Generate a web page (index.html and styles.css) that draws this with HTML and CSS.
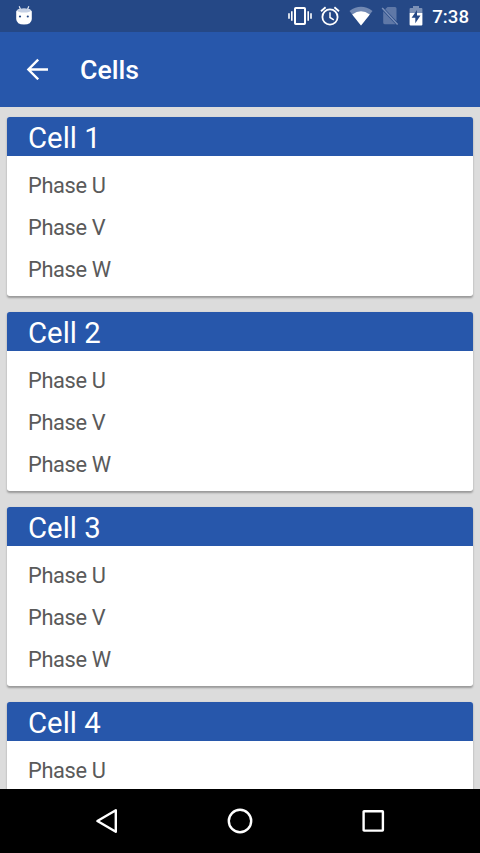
FILE: index.html
```html
<!DOCTYPE html>
<html lang="en">
<head>
<meta charset="utf-8">
<title>Cells</title>
<link rel="stylesheet" href="styles.css">
</head>
<body>
<div class="screen">
  <div class="status">
    <svg class="droid" width="18" height="22" viewBox="0 0 18 22">
      <path d="M4.2 1.2 5.5 4.5M13.8 1.2 12.5 4.5" stroke="#dfe5f0" stroke-width="1.2" fill="none"/>
      <path d="M1.2 6.5Q2 3.5 9 3.5T16.8 6.5V14Q16.5 19.5 9 19.5T1.2 14Z" fill="#fff"/>
      <ellipse cx="9" cy="5.6" rx="7" ry="1.9" fill="#c5d0e4"/>
      <circle cx="5" cy="11.5" r="1.1" fill="#254886"/><circle cx="12.8" cy="11.5" r="1.1" fill="#254886"/>
    </svg>
    <div class="indicators">
      <svg class="vibrate" width="24" height="20" viewBox="0 0 24 20" fill="none" stroke="#fff">
        <rect x="7" y="2" width="10" height="16" rx=".8" stroke-width="2"/>
        <path d="M3.8 5.2v9.6M20.2 5.2v9.6" stroke-width="1.6"/><path d="M1 7.2v5.6M23 7.2v5.6" stroke-width="1.6"/>
      </svg>
      <svg width="20" height="20" viewBox="0 0 20 20" fill="none" stroke="#fff">
        <circle cx="10" cy="11" r="7.6" stroke-width="1.8"/>
        <path d="M1 5.2 5.6 1.2M19 5.2 14.4 1.2" stroke-width="1.8"/><path d="M10 6.3v5.2l3.8 2.3" stroke-width="1.5"/>
      </svg>
      <svg class="wifi" width="24" height="20" viewBox="0 0 24 20">
        <path d="M.5 5Q12-3.4 23.5 5L12 19.4Z" fill="#7289b3"/><path d="M3.2 8.4Q12 2.2 20.8 8.4L12 19.4Z" fill="#fff"/>
      </svg>
      <svg class="sim" width="18" height="20" viewBox="0 0 18 20">
        <path d="M6.5 1H14q1.5 0 1.5 1.5v12.8L4.2 3.3ZM2.2 5.2 14.6 18.2H3.6q-1.4 0-1.4-1.4Z" fill="#5f78a7"/>
        <path d="M1.2 2 16.6 18.4" stroke="#7b90b8" stroke-width="1.5"/>
      </svg>
      <svg class="battery" width="14" height="20" viewBox="0 0 14 20">
        <path d="M4 0h6v2h2.4q1 0 1 1v4H.6V3q0-1 1-1H4Z" fill="#7c91b7"/><path d="M.6 7h12.8v11.5q0 1-1 1H1.6q-1 0-1-1Z" fill="#fff"/>
        <path d="M8 4 2.6 11.8h3.7v5.4l5.2-7.8H8Z" fill="#254886"/>
      </svg>
      <span class="clock">7:38</span>
    </div>
  </div>
  <header class="toolbar">
    <svg width="22" height="22" viewBox="0 0 22 22" fill="none" stroke="#fff" stroke-width="2.4"><path d="M22 11.5H3M12.2 1.7 2.4 11.5l9.8 9.8"/></svg>
    <h1>Cells</h1>
  </header>
  <main class="list">
    <section class="card"><h2>Cell 1</h2><ul><li>Phase U</li><li>Phase V</li><li>Phase W</li></ul></section>
    <section class="card"><h2>Cell 2</h2><ul><li>Phase U</li><li>Phase V</li><li>Phase W</li></ul></section>
    <section class="card"><h2>Cell 3</h2><ul><li>Phase U</li><li>Phase V</li><li>Phase W</li></ul></section>
    <section class="card"><h2>Cell 4</h2><ul><li>Phase U</li></ul></section>
  </main>
  <nav class="navbar">
    <svg width="26" height="28" viewBox="0 0 26 28"><path d="M21.8 3.2V24.8L3.4 14Z"/></svg>
    <svg width="28" height="28" viewBox="0 0 28 28"><circle cx="14" cy="14" r="11.2"/></svg>
    <svg width="26" height="28" viewBox="0 0 26 28"><rect x="3.6" y="4.3" width="19.3" height="19.3" rx=".5"/></svg>
  </nav>
</div>
</body>
</html>
```
FILE: styles.css
```css
* { box-sizing: border-box; }
body { margin: 0; font-family: Roboto, sans-serif; }
.screen { display: flex; flex-direction: column; width: 480px; height: 853px; overflow: hidden; background: #dcdcdc; }
.status { flex: none; height: 32px; display: flex; align-items: center; justify-content: space-between; padding: 0 11px 0 15px; background: #254886; }
.droid { margin-top: -1px; }
.indicators { display: flex; align-items: center; }
.indicators svg { margin-right: 9px; }
.indicators .vibrate { margin-right: 8px; }
.indicators .wifi { margin-right: 8px; }
.indicators .sim { margin-right: 10px; }
.clock { padding-top: 1px; color: #fff; font-size: 18.67px; font-weight: 500; line-height: 32px; }
.toolbar { flex: none; height: 74.67px; display: flex; align-items: center; padding-left: 26px; background: #2757ab; }
.toolbar h1 { margin: 1px 0 0 32px; color: #fff; font-size: 26.67px; font-weight: 500; line-height: 32px; }
.list { flex: 1; min-height: 0; overflow: hidden; display: flex; flex-direction: column; gap: 16px; padding: 10.67px 6.67px 0; }
.card { flex: none; height: 179px; background: #fff; border-radius: 2.67px; overflow: hidden; box-shadow: 0 1.5px 2px rgba(0,0,0,.3); }
.card h2 { margin: 0; height: 39px; padding-left: 21.33px; background: #2757ab; color: #fff; font-size: 29.33px; font-weight: 400; line-height: 43px; }
.card ul { margin: 0; padding: 9px 0 0 21.33px; list-style: none; }
.card li { height: 42px; line-height: 42px; color: #5a5a5a; font-size: 21.8px; letter-spacing: -.35px; }
.navbar { flex: none; height: 64px; display: flex; align-items: center; justify-content: space-between; padding: 0 94px; background: #000; }
.navbar svg { fill: none; stroke: #fff; stroke-width: 2.4; stroke-linejoin: round; }
```
